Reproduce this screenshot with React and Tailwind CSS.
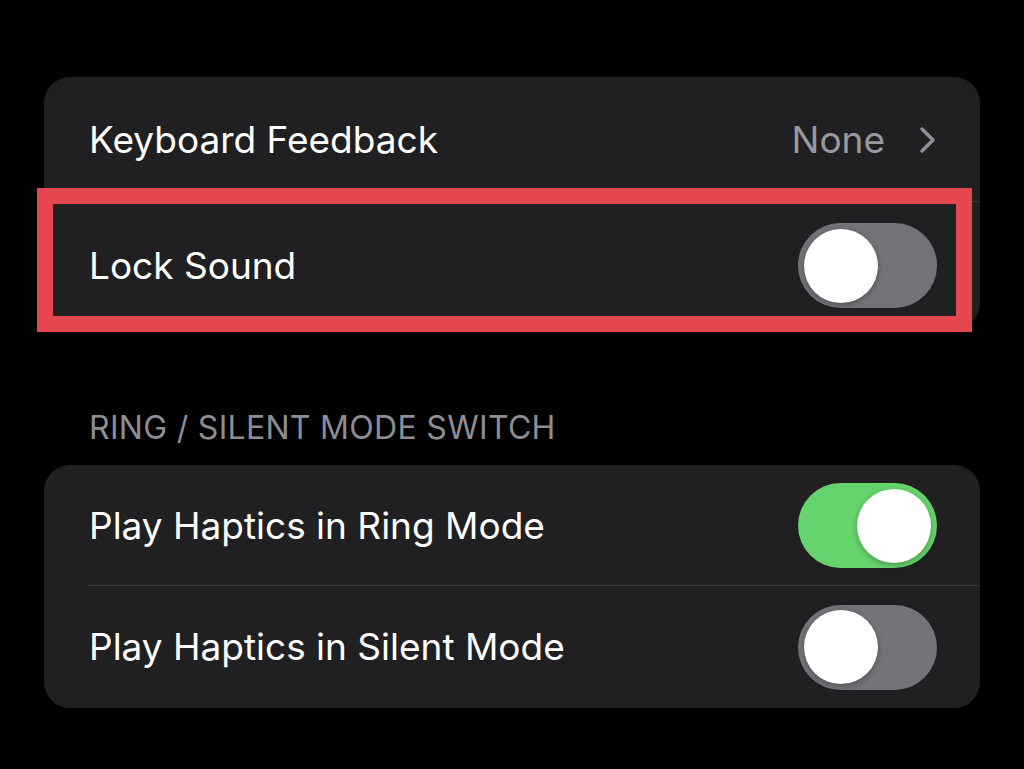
import React from "react";

const Toggle = ({ on }) => (
  <div
    className={`flex h-[85px] w-[139px] shrink-0 items-center rounded-full px-[6px] ${
      on ? "justify-end bg-[#65d46c]" : "justify-start bg-[#737378]"
    }`}
  >
    <div className="h-[74px] w-[74px] rounded-full bg-white shadow-[0_2px_6px_rgba(0,0,0,0.3)]" />
  </div>
);

const Row = ({ label, children, divider, h = "h-[122px]" }) => (
  <div className={`relative flex ${h} items-center justify-between pl-[45px] pr-[43px]`}>
    <span className="text-[37px] text-white">{label}</span>
    {children}
    {divider && <div className="absolute bottom-0 left-[45px] right-0 h-px bg-[#3a3a3d]" />}
  </div>
);

export default function App() {
  return (
    <div
      className="min-h-[769px] w-[1024px] bg-black pt-[77px] pl-[44px]"
      style={{ fontFamily: "Inter, 'Noto Sans', sans-serif" }}
    >
      {/* Sounds card */}
      <div className="relative w-[936px] rounded-[26px] bg-[#202022]">
        <Row label="Keyboard Feedback" divider h="h-[125px]">
          <div className="flex items-center gap-[34px]">
            <span className="text-[37px] text-[#98989e]">None</span>
            <svg width="18" height="28" viewBox="0 0 18 28" fill="none">
              <path d="M3 3l11 11L3 25" stroke="#8e8e93" strokeWidth="3.5" strokeLinecap="round" strokeLinejoin="round" />
            </svg>
          </div>
        </Row>
        <Row label="Lock Sound" h="h-[127px]">
          <Toggle on={false} />
        </Row>
        {/* highlight frame */}
        <div className="absolute left-[-7px] top-[111px] h-[144px] w-[935px] border-[16px] border-[#e5474f]" />
      </div>

      <div className="pl-[45px] pt-[79px] pb-[17px] text-[32px] leading-[40px] tracking-[0.3px] text-[#8d8d93]">
        RING / SILENT MODE SWITCH
      </div>

      <div className="w-[936px] rounded-[26px] bg-[#202022]">
        <Row label="Play Haptics in Ring Mode" divider h="h-[121px]">
          <Toggle on />
        </Row>
        <Row label="Play Haptics in Silent Mode">
          <Toggle on={false} />
        </Row>
      </div>
    </div>
  );
}
